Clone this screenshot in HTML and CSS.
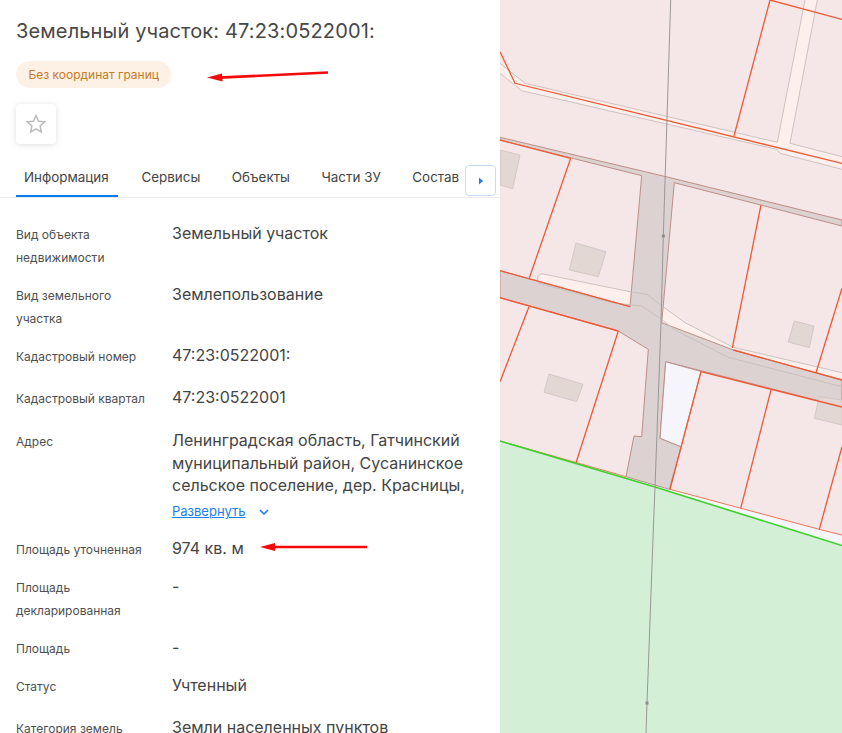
FILE: index.html
```html
<!DOCTYPE html>
<html lang="ru">
<head>
<meta charset="utf-8">
<title>Земельный участок</title>
<link rel="stylesheet" href="styles.css">
</head>
<body>
<div class="page">
  <aside class="panel">
    <header class="head">
      <h1 class="title">Земельный участок: 47:23:0522001:</h1>
      <div class="badge-row">
        <span class="badge">Без координат границ</span>
        <svg class="arrow arrow-badge" viewBox="0 0 122 12" width="122" height="12"><path class="arrow-line" d="M12 6.6 121 1.5"/><path class="arrow-head" d="M0 6.4 15 2.4 15.5 10.4Z"/></svg>
      </div>
      <button class="star-btn" type="button" aria-label="Избранное">
        <svg viewBox="0 0 24 24" width="22" height="22"><path class="star" d="M12 2.8l2.8 6.2 6.7.7-5 4.5 1.4 6.6-5.9-3.4-5.9 3.4 1.4-6.6-5-4.5 6.7-.7z"/></svg>
      </button>
    </header>
    <nav class="tabs">
      <div class="tab-list">
        <span class="tab tab-active">Информация</span>
        <span class="tab">Сервисы</span>
        <span class="tab">Объекты</span>
        <span class="tab">Части ЗУ</span>
        <span class="tab">Состав</span>
      </div>
      <button class="tab-next" type="button" aria-label="Далее">
        <svg viewBox="0 0 6 8" width="6" height="8"><path class="tab-next-icon" d="M1 0.5 5 4 1 7.5Z"/></svg>
      </button>
    </nav>
    <dl class="props">
      <div class="row"><dt class="label">Вид объекта недвижимости</dt><dd class="value">Земельный участок</dd></div>
      <div class="row"><dt class="label">Вид земельного участка</dt><dd class="value">Землепользование</dd></div>
      <div class="row row-tall"><dt class="label">Кадастровый номер</dt><dd class="value">47:23:0522001:</dd></div>
      <div class="row row-tall"><dt class="label">Кадастровый квартал</dt><dd class="value">47:23:0522001</dd></div>
      <div class="row row-address"><dt class="label">Адрес</dt><dd class="value">
        Ленинградская область, Гатчинский муниципальный район, Сусанинское сельское поселение, дер. Красницы,
        <div class="expand"><a class="expand-link" href="#">Развернуть</a>
          <svg class="chevron" viewBox="0 0 10 6" width="10" height="6"><path d="M1 1l4 4 4-4"/></svg>
        </div>
      </dd></div>
      <div class="row">
        <dt class="label">Площадь уточненная</dt><dd class="value">974 кв. м</dd>
        <svg class="arrow arrow-area" viewBox="0 0 108 10" width="108" height="10"><path class="arrow-line" d="M12 5H107"/><path class="arrow-head" d="M0 5 15 1 15 9Z"/></svg>
      </div>
      <div class="row"><dt class="label">Площадь декларированная</dt><dd class="value">-</dd></div>
      <div class="row"><dt class="label">Площадь</dt><dd class="value">-</dd></div>
      <div class="row row-tall"><dt class="label">Статус</dt><dd class="value">Учтенный</dd></div>
      <div class="row"><dt class="label">Категория земель</dt><dd class="value">Земли населенных пунктов</dd></div>
    </dl>
  </aside>
  <main class="map">
    <svg class="map-svg" viewBox="500 0 342 733" width="342" height="733">
      <rect class="m-base" x="500" y="0" width="342" height="733"/>
      <polygon class="m-gap" points="500,441 626,476.7 669,489 740,508 818,529 842,535 842,546 500,441"/>
      <polygon class="m-green" points="500,441 655,487 790,529.3 842,545.5 842,733 500,733"/>
      <polygon class="m-strip" points="500,63.3 525,83.3 777.3,142.3 805,0 817.3,0 790,143.3 842,156.7 842,169.3 780,153.3 776.7,149.3 521.7,90.7 500,73.3"/>
      <polyline class="m-edge" points="500,63.3 525,83.3 777.3,142.3 805,0"/>
      <polyline class="m-edge" points="817.3,0 790,143.3 842,156.7"/>
      <polyline class="m-edge" points="842,169.3 780,153.3 776.7,149.3 521.7,90.7 500,73.3"/>
      <polygon class="m-strip" points="538,277 543,274 630,291.7 630,306.7 541,282"/>
      <polygon class="m-strip" points="646.7,294.3 663,306.7 685,322.7 733.3,347.3 842,372.7 842,380 733.3,350 661.7,322.7 640,310"/>
      <polygon class="m-road" points="500,137.3 666,176.7 842,220 842,226 674.3,182.7 661.7,322.7 733.3,350 842,380 842,406.7 665.7,361.7 660,438.3 681,446.7 669.3,489.3 626,476.7 634,436 641.7,436.7 648.3,349.3 618.3,331 500,297.7 500,270.7 630,306.7 641.7,175.7 500,140"/>
      <polygon class="m-lot" points="665.7,361.7 701,371.5 681,446.7 660,438.3"/>
      <polyline class="m-edge" points="538,283 570,291.7 613,303 641.7,306 660,318.3 675,330 728.3,357.3 842,386.7"/>
      <path class="m-edge" d="M630 291.7 543 274Q538 273.500 537.500 278T540 283M630 291.700 646.700 294.300 663 306.700 685 322.700 733.300 347.300 842 372.700"/>
      <polygon class="m-house" points="500,150 520,155 512.700,188.700 500,185"/>
      <polygon class="m-house" points="576,243 606,251.700 598.300,276.700 569.300,270"/>
      <polygon class="m-house" points="549,374 583,384.300 576.700,401.700 544,392.300"/>
      <polygon class="m-house" points="794.300,321 814,326 809.300,347.700 788.300,342"/>
      <polygon class="m-house" points="819.300,396.700 842,400 842,425 814.300,418.300"/>
      <g class="m-red">
        <polyline points="500,51.700 515,83.300 842,163.300"/>
        <polyline points="734,136 770,0 842,19.300"/>
        <polyline points="500,140 570.700,158.300"/>
        <line x1="570.700" y1="158.300" x2="529.300" y2="278"/>
        <line x1="761" y1="205" x2="732.300" y2="348"/>
        <line x1="842" y1="288.300" x2="816" y2="372.700"/>
        <line x1="529" y1="306.700" x2="500" y2="381.700"/>
        <line x1="618.300" y1="331" x2="576" y2="462.700"/>
        <line x1="701" y1="371.700" x2="670" y2="489.300"/>
        <line x1="771" y1="390" x2="740.700" y2="508.300"/>
        <line x1="842" y1="446.700" x2="819.300" y2="529.300"/>
        <polyline points="500,270.700 630,306.700"/>
        <polyline points="500,297.700 618.300,331"/>
        <polyline points="733.300,350 842,380"/>
        <polyline points="701,371.700 842,407"/>
      </g>
      <g class="m-thin">
        <polyline points="500,441 626,476.700"/>
        <polyline points="669,489 740,508 818,529 842,535"/>
      </g>
      <polyline class="m-green-line" points="500,441 655,487 790,529.300 842,545.500"/>
      <polyline class="m-power" points="670.700,0 663.300,236 661,322.700 655,487 653.300,530 647,703 646,733"/>
      <rect class="m-node" x="661.800" y="234.500" width="3" height="3"/>
      <rect class="m-node" x="645.500" y="701.500" width="3" height="3"/>
    </svg>
  </main>
</div>
</body>
</html>
```
FILE: styles.css
```css
* { box-sizing: border-box; }
html, body { margin: 0; height: 100%; overflow: hidden; background: #fff; }
body { font-family: Inter, "Noto Sans", sans-serif; color: #444; }
.page { display: flex; width: 842px; height: 733px; overflow: hidden; }

.panel { width: 500px; flex: none; height: 733px; overflow: hidden; background: #fff; }
.head { padding: 20px 16px 0; }
.title { margin: 0; font-size: 20px; line-height: 23px; font-weight: 400; color: #474747; letter-spacing: .14px; white-space: nowrap; }
.badge-row { position: relative; margin-top: 18px; height: 27px; }
.badge { display: inline-flex; align-items: center; height: 27px; padding: 0 12.5px; border-radius: 14px; background: #fdf0e5; color: #c67b26; font-size: 12px; }
.arrow { position: absolute; }
.arrow-badge { left: 191px; top: 10px; }
.arrow-area { left: 244px; top: 5px; }
.arrow-line { fill: none; stroke: #f40a0a; stroke-width: 2.6; }
.arrow-head { fill: #f40a0a; }
.star-btn { display: flex; align-items: center; justify-content: center; width: 40px; height: 40px; margin-top: 16px; padding: 0; border: 0; border-radius: 4px; background: #fff; box-shadow: 0 1px 6px rgba(0, 0, 0, .13); }
.star { fill: none; stroke: #b9b9b9; stroke-width: 1.6; stroke-linejoin: miter; }

.tabs { position: relative; display: flex; height: 33px; margin-top: 21px; border-bottom: 1px solid #e9ebee; }
.tab-list { display: flex; gap: 15.500px; width: 460px; padding-left: 16px; overflow: hidden; }
.tab { flex: none; height: 32px; padding: 0 8px; font-size: 13.400px; line-height: 24px; color: #444; white-space: nowrap; }
.tab-active { min-width: 102px; border-bottom: 2px solid #0a7cf2; }
.tab-next { position: absolute; left: 465px; top: 0; display: flex; align-items: center; justify-content: center; width: 31px; height: 31px; padding: 0; border: 1px solid #c4dcf7; border-radius: 4px; background: #fff; }
.tab-next-icon { fill: #1e7fe8; }

.props { margin: 24px 0 0; padding: 0 16px; }
.row { position: relative; display: flex; padding-bottom: 14px; }
.row-tall { padding-bottom: 18px; }
.row-address { padding-top: 1px; padding-bottom: 13.400px; }
.label { flex: none; width: 156px; padding: 1px 26px 0 0; font-size: 12px; line-height: 23px; color: #4f4f4f; }
.value { margin: 0; flex: 1; font-size: 16px; line-height: 22.700px; color: #444; }
.expand { display: flex; align-items: center; gap: 13px; height: 26px; padding-top: 3px; }
.expand-link { font-size: 13px; color: #1a7fec; text-decoration: underline; }
.chevron { fill: none; stroke: #1a7fec; stroke-width: 1.6; }

.map { flex: 1; height: 733px; overflow: hidden; }
.map-svg { display: block; }
.m-base { fill: #f5e6e7; }
.m-gap { fill: #f6f5fb; }
.m-green { fill: #d3efd6; }
.m-strip { fill: #fdf0ec; }
.m-edge { fill: none; stroke: #c6bebb; stroke-width: .9; }
.m-road { fill: #dcd2d2; stroke: #bd8f85; stroke-width: 1; }
.m-lot { fill: #f6f5fb; stroke: #bd8f85; stroke-width: 1; }
.m-house { fill: #e3d7d4; stroke: #cdc3c0; stroke-width: .8; }
.m-red { fill: none; stroke: #ee5a36; stroke-width: 1.300; }
.m-thin { fill: none; stroke: #ee6a4a; stroke-width: .9; }
.m-green-line { fill: none; stroke: #3fd02f; stroke-width: 1.600; }
.m-power { fill: none; stroke: #9b9696; stroke-width: 1; }
.m-node { fill: #8f8a8a; }
```
